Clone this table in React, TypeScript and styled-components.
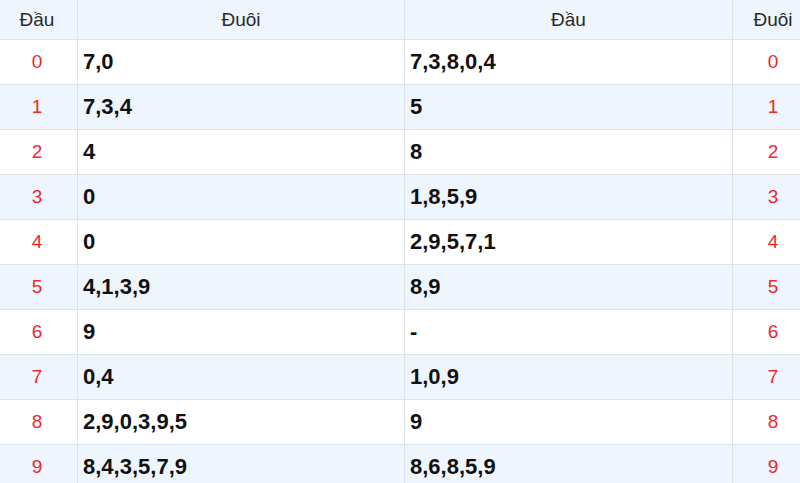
import React from "react";
import styled, { createGlobalStyle } from "styled-components";

const GlobalStyle = createGlobalStyle`
  body {
    margin: 0;
    background: #fff;
    font-family: "Liberation Sans", Arial, sans-serif;
  }
`;

const Frame = styled.div`
  width: 800px;
  overflow: hidden;
`;

const Table = styled.table`
  width: 813px;
  margin-left: -3px;
  border-collapse: collapse;
  table-layout: fixed;
`;

const HeadCell = styled.th<{ $w: number }>`
  width: ${(p) => p.$w}px;
  height: 39px;
  padding: 0;
  background: #eef5fd;
  border: 1px solid #dce3ea;
  border-top: none;
  font-weight: normal;
  font-size: 19px;
  color: #2a2a2a;
  text-align: center;
  &:first-child { border-left: none; }
  &:last-child { border-right: none; }
`;

const Row = styled.tr<{ $alt: boolean }>`
  background: ${(p) => (p.$alt ? "#eef5fd" : "#fff")};
`;

const NumCell = styled.td`
  height: 44px;
  padding: 0;
  border: 1px solid #dce3ea;
  text-align: center;
  font-size: 19px;
  color: #f0262b;
  &:first-child { border-left: none; }
  &:last-child { border-right: none; }
`;

const ValueCell = styled.td`
  height: 44px;
  padding: 0 5px;
  border: 1px solid #dce3ea;
  font-size: 22px;
  font-weight: bold;
  color: #111;
`;

const rows: [string, string][] = [
  ["7,0", "7,3,8,0,4"],
  ["7,3,4", "5"],
  ["4", "8"],
  ["0", "1,8,5,9"],
  ["0", "2,9,5,7,1"],
  ["4,1,3,9", "8,9"],
  ["9", "-"],
  ["0,4", "1,0,9"],
  ["2,9,0,3,9,5", "9"],
  ["8,4,3,5,7,9", "8,6,8,5,9"],
];

export default function App() {
  return (
    <>
      <GlobalStyle />
      <Frame>
        <Table>
          <thead>
            <tr>
              <HeadCell $w={80}>Đầu</HeadCell>
              <HeadCell $w={326}>Đuôi</HeadCell>
              <HeadCell $w={327}>Đầu</HeadCell>
              <HeadCell $w={80}>Đuôi</HeadCell>
            </tr>
          </thead>
          <tbody>
            {rows.map(([tail, head], i) => (
              <Row key={i} $alt={i % 2 === 1}>
                <NumCell>{i}</NumCell>
                <ValueCell>{tail}</ValueCell>
                <ValueCell>{head}</ValueCell>
                <NumCell>{i}</NumCell>
              </Row>
            ))}
          </tbody>
        </Table>
      </Frame>
    </>
  );
}
